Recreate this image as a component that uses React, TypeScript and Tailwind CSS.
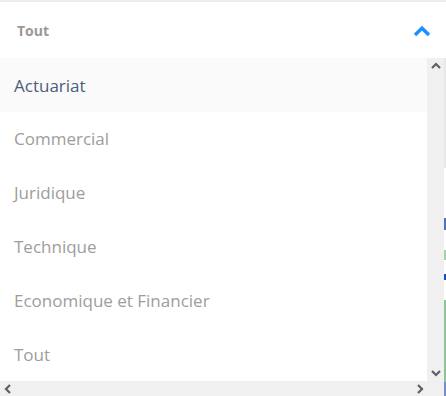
import React from "react";

const items = ["Actuariat", "Commercial", "Juridique", "Technique", "Economique et Financier", "Tout"];

export default function App() {
  return (
    <div className="w-[446px] h-[396px] overflow-hidden bg-white flex flex-col" style={{ fontFamily: '"Open Sans", "Noto Sans", sans-serif' }}>
      <div className="h-[2px] bg-[#ececec] shrink-0" />
      <div className="h-[56px] shrink-0 flex items-center justify-between pl-[17px] pr-[15px]">
        <span className="text-[14px] font-bold text-[#9b9896]">Tout</span>
        <svg width="18" height="12" viewBox="0 0 18 12" className="mt-[1px]">
          <path d="M2 10 L9 3.2 L16 10" fill="none" stroke="#1a90ff" strokeWidth="3.4" />
        </svg>
      </div>
      <div className="flex flex-1 min-h-0">
        <div className="flex-1 flex flex-col">
          <div className="flex flex-1 min-h-0">
            <div className="flex-1 flex flex-col">
              {items.map((t, i) => (
                <div
                  key={t + i}
                  className={`h-[54px] flex items-center pl-[14px] text-[17px] pt-[1px] ${i === 0 ? "bg-[#fafafa] text-[#4d5d78]" : "text-[#9d9d9d]"}`}
                >
                  {t}
                </div>
              ))}
            </div>
            <div className="w-[17px] bg-[#f0f0f0] flex flex-col justify-between items-center pt-[4px] pb-[4px]">
              <svg width="10" height="7" viewBox="0 0 10 7">
                <path d="M1 6 L5 2 L9 6" fill="none" stroke="#5f5f5f" strokeWidth="2.2" />
              </svg>
              <svg width="10" height="7" viewBox="0 0 10 7">
                <path d="M1 1 L5 5 L9 1" fill="none" stroke="#5f5f5f" strokeWidth="2.2" />
              </svg>
            </div>
          </div>
          <div className="h-[15px] bg-[#f0f0f0] flex items-center justify-between pl-[4px] pr-[20px]">
            <svg width="7" height="10" viewBox="0 0 7 10">
              <path d="M6 1 L2 5 L6 9" fill="none" stroke="#5f5f5f" strokeWidth="2.2" />
            </svg>
            <svg width="7" height="10" viewBox="0 0 7 10">
              <path d="M1 1 L5 5 L1 9" fill="none" stroke="#5f5f5f" strokeWidth="2.2" />
            </svg>
          </div>
        </div>
        <div className="w-[2px] flex flex-col bg-white">
          <div className="h-[110px] bg-[#e8e8e8]" />
          <div className="h-[50px]" />
          <div className="h-[12px] bg-[#5470b0]" />
          <div className="h-[20px]" />
          <div className="h-[10px] bg-[#a8cfb0]" />
          <div className="h-[14px]" />
          <div className="h-[6px] bg-[#1050c0]" />
          <div className="h-[20px]" />
          <div className="flex-1 bg-[#8cc49a]" />
          <div className="h-[14px] bg-[#7090d0]" />
        </div>
      </div>
    </div>
  );
}
